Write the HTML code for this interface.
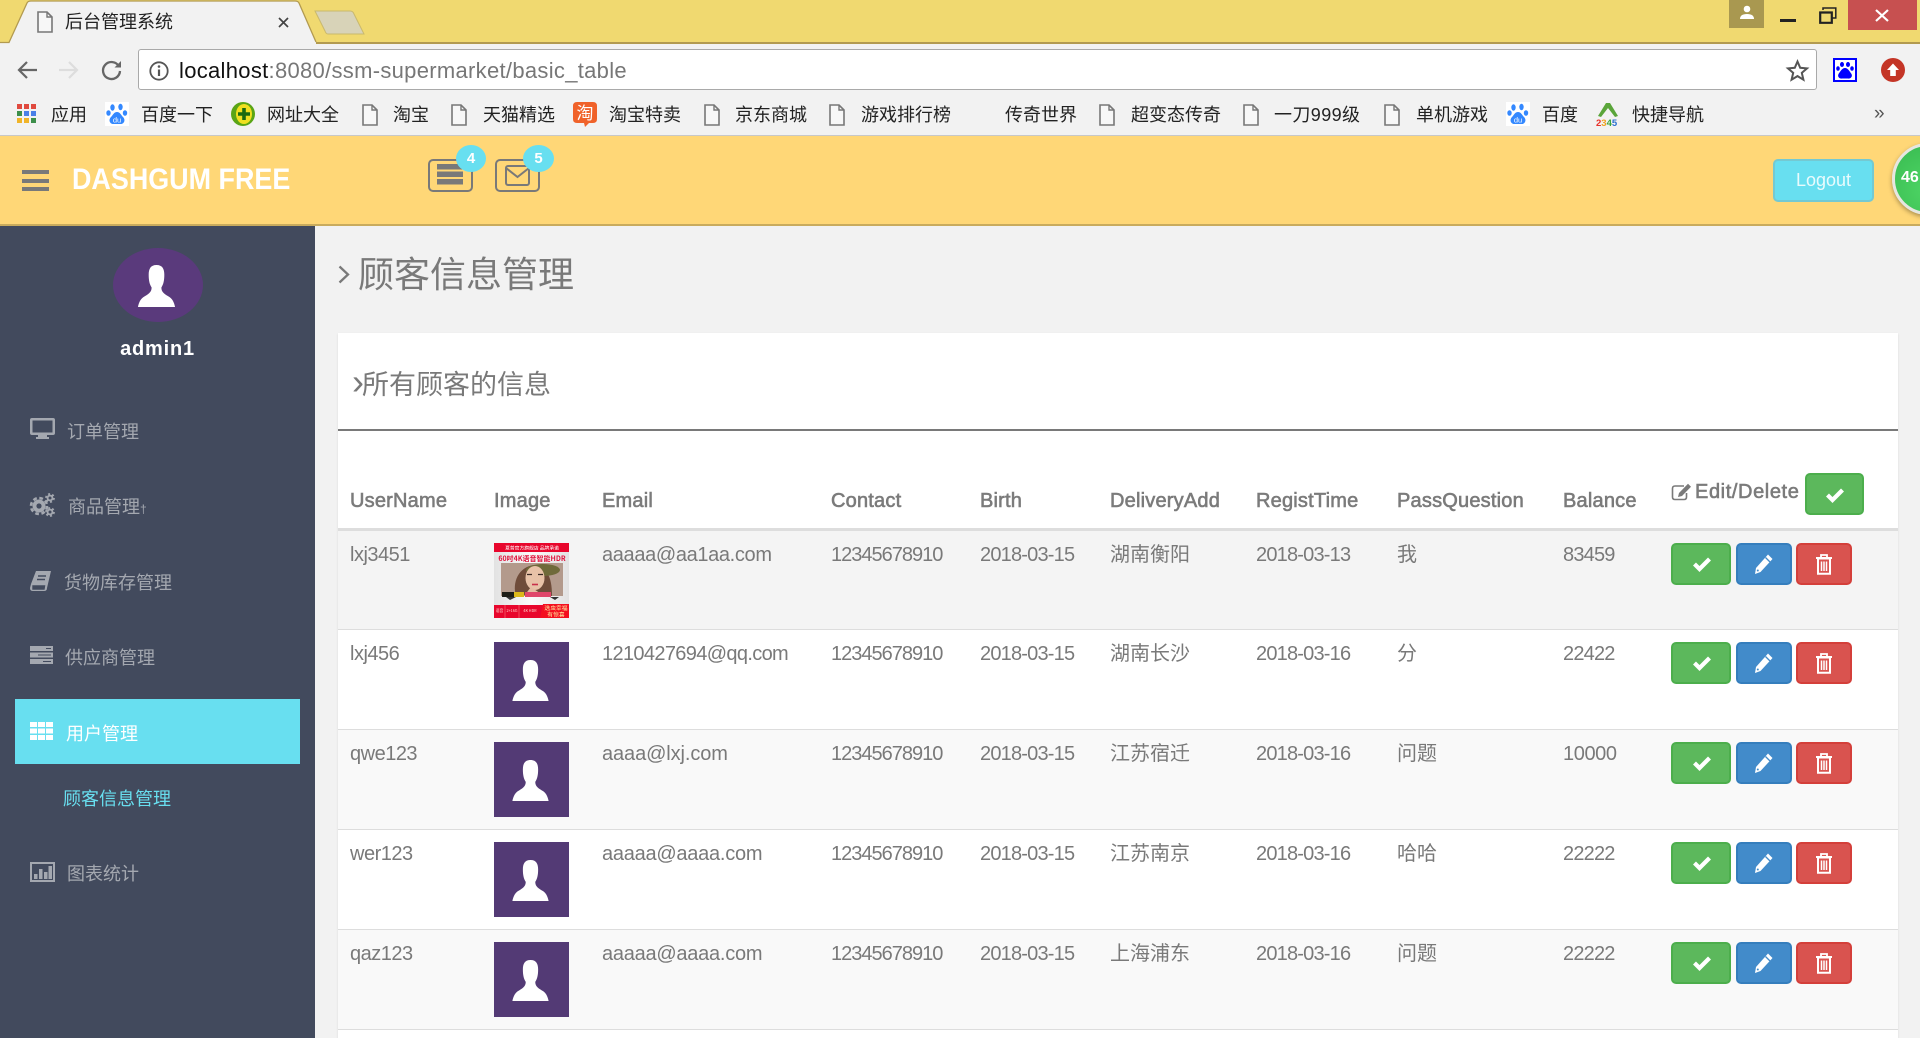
<!DOCTYPE html>
<html lang="zh"><head><meta charset="utf-8"><title>后台管理系统</title>
<style>
html,body{margin:0;padding:0}
body{width:1920px;height:1038px;overflow:hidden;position:relative;background:#f2f2f2;font-family:"Liberation Sans","Noto Sans CJK SC",sans-serif;color:#797979}
.a{position:absolute;white-space:nowrap}
svg{position:absolute;overflow:visible}
.bm{position:absolute;top:103px;line-height:24px;font-size:18px;color:#222;white-space:nowrap}
.m{position:absolute;white-space:nowrap;font-size:18px;line-height:26px;color:#a4a8b0}
table{position:absolute;left:338px;top:444px;width:1560px;border-collapse:collapse;table-layout:fixed;color:#797979}
th{height:85px;padding:0 0 15px 0;box-sizing:border-box;border-bottom:3px solid #ddd;vertical-align:bottom;text-align:left;font-size:20px;line-height:24px;font-weight:normal;-webkit-text-stroke:.6px #7b7b7b;letter-spacing:.2px;white-space:nowrap;color:#7b7b7b}
td{height:100px;padding:12px 0 0 0;box-sizing:border-box;border-bottom:1px solid #ddd;vertical-align:top;font-size:20px;line-height:24px;white-space:nowrap}
tr.o td{background:#f9f9f9}
tr.h td{background:#f4f4f4}
tr.w td{background:#fff}
td.n{letter-spacing:-.8px}
td.p{letter-spacing:-1px}
td.e{letter-spacing:-.35px}
td:first-child{letter-spacing:-.5px}
td:first-child,th:first-child{padding-left:12px}
.pic{display:block;width:75px;height:75px;background:#533a75;position:relative}
.btn{position:absolute;top:12px;height:42px;box-sizing:border-box;border-radius:5px;border:2px solid}
.g{background:#5cb85c;border-color:#4cae4c;left:0;width:60px}
.b{background:#428bca;border-color:#357ebd;left:64px;width:56px}
.r{background:#d9534f;border-color:#d43f3a;left:125px;width:56px}
</style></head><body>
<svg width="0" height="0" style="position:absolute">
<defs>
<symbol id="doc" viewBox="0 0 16 22"><path d="M1 1H10L15 6V21H1Z" fill="#f7f7f7" stroke="#777" stroke-width="1.6"/><path d="M10 1V6H15" fill="none" stroke="#777" stroke-width="1.4"/></symbol>
<symbol id="paw" viewBox="0 0 24 24"><rect width="24" height="24" fill="#fff"/><ellipse cx="7.5" cy="5.5" rx="2.2" ry="3.2" fill="#3388ff"/><ellipse cx="15.5" cy="5" rx="2.2" ry="3.2" fill="#3388ff"/><ellipse cx="3.5" cy="11" rx="2.2" ry="2.8" fill="#3388ff"/><ellipse cx="20" cy="11" rx="2.2" ry="2.8" fill="#3388ff"/><path d="M12 10C9 10 8 13 6 15C3 18 5 22.500 9 22H15C19 22.500 21 18 18 15C16 13 15 10 12 10Z" fill="#3388ff"/><text x="12" y="20.500" font-size="7.500" fill="#fff" text-anchor="middle" font-family="Liberation Sans">du</text></symbol>
<symbol id="user" viewBox="0 0 38 43"><path d="M19 0C13 0 11 4 11 10C11 16 12 20 14 23C14 27 12 29 7 32C3 34 1 38 0 43H38C37 38 35 34 31 32C26 29 24 27 24 23C26 20 27 16 27 10C27 4 25 0 19 0Z" fill="#fff"/></symbol>
<symbol id="chk" viewBox="0 0 20 16"><path d="M2.500 8L7.500 13L17.500 3" fill="none" stroke="#fff" stroke-width="4.200"/></symbol>
<symbol id="pen" viewBox="0 0 20 22"><path d="M14 1.500L18.500 6L6.500 19L1 21L2 15Z" fill="#fff"/><path d="M11.500 4.500L16 9" stroke="#428bca" stroke-width="1.300"/><circle cx="3.800" cy="17.500" r="1" fill="#428bca"/></symbol>
<symbol id="tr" viewBox="0 0 18 22"><path d="M1 5H17" stroke="#fff" stroke-width="2"/><path d="M6 4.500V2H12V4.500" fill="none" stroke="#fff" stroke-width="1.800"/><path d="M3 5.500H15V20.800H3Z" fill="none" stroke="#fff" stroke-width="2"/><path d="M6.500 8.500V18M9 8.500V18M11.500 8.500V18" stroke="#fff" stroke-width="1.500"/></symbol>
</defs></svg>

<!-- browser chrome -->
<div class="a" style="left:0;top:0;width:1920px;height:43px;background:#f0d970"></div>
<div class="a" style="left:0;top:42px;width:1920px;height:1.500px;background:#b29a50"></div>
<svg style="left:0;top:0" width="380" height="44"><path d="M0 42H9L27 3Q28 1 31 1H295Q298 1 299 3L316 42V44H0Z" fill="#f2f2f2"/><path d="M0 42.500H9L27 3Q28 1 31 1H295Q298 1 299 3L316 42" fill="none" stroke="#b29a50" stroke-width="1.300"/><path d="M315 11H350Q353 11 354 14L364 34H328Q326 34 325 31Z" fill="#d8d3b8" stroke="#c9b96d"/></svg>
<svg style="left:37px;top:11px" width="16" height="22"><use href="#doc"/></svg>
<div class="a" style="left:65px;top:9px;font-size:18px;line-height:26px;color:#222">后台管理系统</div>
<svg style="left:278px;top:17px" width="11" height="11"><path d="M1 1L10 10M10 1L1 10" stroke="#444" stroke-width="1.700"/></svg>
<div class="a" style="left:1729px;top:0;width:35px;height:28px;background:#a99850"></div>
<svg style="left:1739px;top:5px" width="16" height="14"><circle cx="8" cy="4" r="3.300" fill="#fff"/><path d="M1 14Q1 9 8 9Q15 9 15 14Z" fill="#fff"/></svg>
<div class="a" style="left:1780px;top:19px;width:16px;height:3px;background:#222"></div>
<svg style="left:1819px;top:7px" width="18" height="17"><path d="M1.200 5.500H12.800V15.800H1.200Z" fill="none" stroke="#222" stroke-width="2.200"/><path d="M4 3V1H16.800V11H13" fill="none" stroke="#222" stroke-width="1.500"/></svg>
<div class="a" style="left:1848px;top:0;width:69px;height:30px;background:#c75050"></div>
<svg style="left:1875px;top:9px" width="14" height="13"><path d="M1 1L13 12M13 1L1 12" stroke="#fff" stroke-width="2.200"/></svg>

<div class="a" style="left:0;top:43.500px;width:1920px;height:91.500px;background:#f2f2f2"></div>
<div class="a" style="left:0;top:135px;width:1920px;height:1px;background:#c8c8c8"></div>
<svg style="left:17px;top:60px" width="20" height="20"><path d="M10 2L2 10L10 18M2.500 10H20" fill="none" stroke="#666" stroke-width="2.200"/></svg>
<svg style="left:59px;top:60px" width="20" height="20"><path d="M10 2L18 10L10 18M17.500 10H0" fill="none" stroke="#ddd" stroke-width="2.200"/></svg>
<svg style="left:101px;top:60px" width="21" height="21"><path d="M18 6.500A8.500 8.500 0 1 0 19 11" fill="none" stroke="#666" stroke-width="2.300"/><path d="M13.500 7.500H20V1Z" fill="#666"/></svg>
<div class="a" style="left:138px;top:49px;width:1679px;height:41px;box-sizing:border-box;background:#fff;border:1.500px solid #a9a9a9;border-radius:3px"></div>
<svg style="left:149px;top:61px" width="20" height="20"><circle cx="10" cy="10" r="8.700" fill="none" stroke="#555" stroke-width="1.800"/><path d="M10 8.500V15" stroke="#555" stroke-width="2.200"/><circle cx="10" cy="5.500" r="1.300" fill="#555"/></svg>
<div class="a" style="left:179px;top:58px;font-size:22px;line-height:26px;color:#777;letter-spacing:.3px"><span style="color:#111">localhost</span>:8080/ssm-supermarket/basic_table</div>
<svg style="left:1786px;top:59px" width="23" height="23"><path d="M11.500 2.500L14.200 8.800L21 9.400L15.800 13.900L17.400 20.700L11.500 17.100L5.600 20.700L7.200 13.900L2 9.400L8.800 8.800Z" fill="#fff" stroke="#555" stroke-width="2"/></svg>
<svg style="left:1833px;top:58px" width="24" height="24"><rect x="1" y="1" width="22" height="22" fill="#fff" stroke="#00f" stroke-width="2"/><ellipse cx="9" cy="6.500" rx="2" ry="2.500" fill="#00f"/><ellipse cx="15" cy="6.500" rx="2" ry="2.500" fill="#00f"/><ellipse cx="5" cy="10.500" rx="1.800" ry="2.300" fill="#00f"/><ellipse cx="19" cy="10.500" rx="1.800" ry="2.300" fill="#00f"/><path d="M12 10C9 10 7 14 5.500 16C4 19 7 21 9 20.500H15C17 21 20 19 18.500 16C17 14 15 10 12 10Z" fill="#00f"/></svg>
<svg style="left:1881px;top:58px" width="24" height="24"><circle cx="12" cy="12" r="12" fill="#c43526"/><path d="M12 5.500L18 12H14.800V18H9.200V12H6Z" fill="#fff"/></svg>

<!-- bookmarks -->
<svg style="left:17px;top:104px" width="19" height="19"><g fill="#e04a3f"><rect width="5" height="5"/><rect x="7" width="5" height="5"/><rect x="14" width="5" height="5"/></g><g fill="#3d8f4b"><rect y="7" width="5" height="5"/></g><g fill="#4a80e8"><rect x="7" y="7" width="5" height="5"/><rect x="14" y="7" width="5" height="5"/></g><g fill="#f0b429"><rect y="14" width="5" height="5"/><rect x="7" y="14" width="5" height="5"/></g><rect x="14" y="14" width="5" height="5" fill="#3d8f4b"/></svg>
<div class="bm" style="left:51px">应用</div>
<svg style="left:105px;top:102px" width="24" height="24"><use href="#paw"/></svg>
<div class="bm" style="left:141px">百度一下</div>
<svg style="left:231px;top:102px" width="24" height="24"><circle cx="12" cy="12" r="12" fill="#5aa516"/><ellipse cx="13" cy="12" rx="8" ry="10" fill="#f0e020"/><path d="M13 6V18M7 12H19" stroke="#1a6a10" stroke-width="3.600"/></svg>
<div class="bm" style="left:267px">网址大全</div>
<svg style="left:362px;top:104px" width="16" height="22"><use href="#doc"/></svg>
<div class="bm" style="left:393px">淘宝</div>
<svg style="left:451px;top:104px" width="16" height="22"><use href="#doc"/></svg>
<div class="bm" style="left:483px">天猫精选</div>
<svg style="left:573px;top:102px" width="24" height="25"><path d="M4 0H20Q24 0 24 4V17Q24 21 20 21H16L12 25L11 21H4Q0 21 0 17V4Q0 0 4 0Z" fill="#f0622a"/><text x="12" y="17" font-size="17" fill="#fff" text-anchor="middle" font-family="Noto Sans CJK SC">淘</text></svg>
<div class="bm" style="left:609px">淘宝特卖</div>
<svg style="left:704px;top:104px" width="16" height="22"><use href="#doc"/></svg>
<div class="bm" style="left:735px">京东商城</div>
<svg style="left:829px;top:104px" width="16" height="22"><use href="#doc"/></svg>
<div class="bm" style="left:861px">游戏排行榜</div>
<div class="bm" style="left:1005px">传奇世界</div>
<svg style="left:1099px;top:104px" width="16" height="22"><use href="#doc"/></svg>
<div class="bm" style="left:1131px">超变态传奇</div>
<svg style="left:1243px;top:104px" width="16" height="22"><use href="#doc"/></svg>
<div class="bm" style="left:1274px;letter-spacing:.4px">一刀999级</div>
<svg style="left:1384px;top:104px" width="16" height="22"><use href="#doc"/></svg>
<div class="bm" style="left:1416px">单机游戏</div>
<svg style="left:1506px;top:102px" width="24" height="24"><use href="#paw"/></svg>
<div class="bm" style="left:1542px">百度</div>
<svg style="left:1596px;top:102px" width="24" height="24"><path d="M2 14L10 1H14L22 14L19 15L12 6L5 15Z" fill="#5aa53a"/><text x="0" y="24" font-size="9.500" font-weight="bold" font-family="Liberation Sans"><tspan fill="#e8322a">2</tspan><tspan fill="#f0a020">3</tspan><tspan fill="#3aa53a">4</tspan><tspan fill="#2a70d0">5</tspan></text></svg>
<div class="bm" style="left:1632px">快捷导航</div>
<div class="a" style="left:1874px;top:101px;font-size:19px;line-height:26px;color:#555">»</div>

<!-- header -->
<div class="a" style="left:0;top:136px;width:1920px;height:88px;background:#ffd777"></div>
<div class="a" style="left:0;top:224px;width:1920px;height:2px;background:#c9ab5d"></div>
<div class="a" style="left:22px;top:170px;width:27px;height:4px;background:#797979"></div>
<div class="a" style="left:22px;top:179px;width:27px;height:4px;background:#797979"></div>
<div class="a" style="left:22px;top:187px;width:27px;height:4px;background:#797979"></div>
<div class="a" style="left:72px;top:162px;font-size:30px;line-height:36px;font-weight:bold;color:#fff;transform:scaleX(.897);transform-origin:left center">DASHGUM FREE</div>
<div class="a" style="left:428px;top:159px;width:45px;height:33px;box-sizing:border-box;border:2px solid #797979;border-radius:5px"></div>
<svg style="left:437px;top:164px" width="26" height="23"><g fill="#797979"><rect width="26" height="5.500"/><rect y="7.500" width="26" height="5.500"/><rect y="15" width="26" height="5.500"/></g></svg>
<div class="a" style="left:495px;top:159px;width:45px;height:33px;box-sizing:border-box;border:2px solid #797979;border-radius:5px"></div>
<svg style="left:505px;top:165px" width="25" height="21"><rect x="1" y="1" width="23" height="19" fill="none" stroke="#797979" stroke-width="2" rx="2"/><path d="M1 3L12.500 12L24 3" fill="none" stroke="#797979" stroke-width="2"/></svg>
<div class="a" style="left:456px;top:145px;width:30px;height:27px;border-radius:50%;background:#68dff0;color:#fff;font-size:15px;font-weight:bold;line-height:27px;text-align:center">4</div>
<div class="a" style="left:523px;top:145px;width:31px;height:27px;border-radius:50%;background:#68dff0;color:#fff;font-size:15px;font-weight:bold;line-height:27px;text-align:center">5</div>
<div class="a" style="left:1773px;top:159px;width:101px;height:43px;box-sizing:border-box;border:2px solid #74c9d2;border-radius:5px;background:#68dff0;color:#e9fbfd;font-size:18px;line-height:39px;text-align:center">Logout</div>
<div class="a" style="left:1892px;top:143px;width:72px;height:72px;box-sizing:border-box;border-radius:50%;border:3px solid #e6e6e0;background:radial-gradient(circle at 50% 65%,#4ed565,#38ba50);box-shadow:0 2px 5px rgba(0,0,0,.35)"></div>
<div class="a" style="left:1901px;top:167px;font-size:16px;line-height:22px;font-weight:bold;color:#fff">46</div>

<!-- sidebar -->
<div class="a" style="left:0;top:226px;width:315px;height:812px;background:#424a5d"></div>
<div class="a" style="left:113px;top:248px;width:90px;height:74px;border-radius:50%;background:#5a3a7c"></div>
<svg style="left:135px;top:265px" width="43" height="42"><use href="#user" width="43" height="42"/></svg>
<div class="a" style="left:0;top:335px;width:315px;text-align:center;font-size:20px;line-height:28px;font-weight:bold;color:#fff;letter-spacing:.8px">admin1</div>

<svg style="left:30px;top:418px" width="25" height="21"><path d="M2 0H23Q25 0 25 2V15Q25 17 23 17H2Q0 17 0 15V2Q0 0 2 0Z" fill="#a4a8b0"/><rect x="2.500" y="2.500" width="20" height="12" fill="#424a5d"/><rect x="8" y="17" width="9" height="2" fill="#a4a8b0"/><rect x="6" y="19" width="13" height="2" fill="#a4a8b0"/></svg>
<div class="m" style="left:67px;top:419px">订单管理</div>
<svg style="left:30px;top:493px" width="25" height="24"><circle cx="9" cy="13" r="6.500" fill="#a4a8b0"/><circle cx="9" cy="13" r="8" fill="none" stroke="#a4a8b0" stroke-width="2.600" stroke-dasharray="3.700 2.600"/><circle cx="9" cy="13" r="2.600" fill="#424a5d"/><circle cx="20" cy="5" r="3.400" fill="#a4a8b0"/><circle cx="20" cy="5" r="4" fill="none" stroke="#a4a8b0" stroke-width="1.800" stroke-dasharray="2 2.200"/><circle cx="20" cy="5" r="1.500" fill="#424a5d"/><circle cx="20" cy="19" r="3.400" fill="#a4a8b0"/><circle cx="20" cy="19" r="4" fill="none" stroke="#a4a8b0" stroke-width="1.800" stroke-dasharray="2 2.200"/><circle cx="20" cy="19" r="1.500" fill="#424a5d"/></svg>
<div class="m" style="left:68px;top:494px">商品管理<span style="font-size:12px">†</span></div>
<svg style="left:30px;top:571px" width="22" height="21"><path d="M6 0H21L17 17Q17 20 14 20H3Q0 20 0 17L1 13Z" fill="#a4a8b0"/><path d="M8 5H16M7 8.500H15M3 15H14.500L14 18H3Z" stroke="#424a5d" stroke-width="1.400" fill="#424a5d"/></svg>
<div class="m" style="left:64px;top:570px">货物库存管理</div>
<svg style="left:30px;top:646px" width="23" height="18"><g fill="#a4a8b0"><rect width="23" height="5"/><rect y="6.500" width="23" height="5"/><rect y="13" width="23" height="5"/></g><g fill="#424a5d"><rect x="16" y="2" width="5" height="1"/><rect x="8" y="8.500" width="13" height="1"/><rect x="13" y="15" width="8" height="1"/></g></svg>
<div class="m" style="left:65px;top:645px">供应商管理</div>
<div class="a" style="left:15px;top:699px;width:285px;height:65px;background:#68dff0"></div>
<svg style="left:30px;top:722px" width="23" height="18"><g fill="#fff"><rect width="7" height="5"/><rect x="8" width="7" height="5"/><rect x="16" width="7" height="5"/><rect y="6.500" width="7" height="5"/><rect x="8" y="6.500" width="7" height="5"/><rect x="16" y="6.500" width="7" height="5"/><rect y="13" width="7" height="5"/><rect x="8" y="13" width="7" height="5"/><rect x="16" y="13" width="7" height="5"/></g></svg>
<div class="m" style="left:66px;top:721px;color:#fff">用户管理</div>
<div class="m" style="left:63px;top:786px;color:#68dff0">顾客信息管理</div>
<svg style="left:30px;top:862px" width="25" height="20"><rect x="1" y="1" width="23" height="18" fill="none" stroke="#a4a8b0" stroke-width="2"/><g fill="#a4a8b0"><rect x="4" y="12" width="3.500" height="5"/><rect x="9" y="7" width="3.500" height="10"/><rect x="14" y="10" width="3.500" height="7"/><rect x="18.500" y="4" width="3.500" height="13"/></g></svg>
<div class="m" style="left:67px;top:861px">图表统计</div>

<!-- main -->
<svg style="left:338px;top:265px" width="12" height="19"><path d="M1.500 1.500L10 9.500L1.500 17.500" fill="none" stroke="#797979" stroke-width="2.300"/></svg>
<div class="a" style="left:358px;top:249px;font-size:36px;line-height:52px;color:#797979">顾客信息管理</div>
<div class="a" style="left:338px;top:333px;width:1560px;height:705px;background:#fff;box-shadow:0 1px 2px rgba(0,0,0,.1)"></div>
<div class="a" style="left:352px;top:365px;font-size:27px;line-height:40px;color:#797979"><span style="font-size:36px;line-height:0;margin-right:-2px">›</span>所有顾客的信息</div>
<div class="a" style="left:338px;top:429px;width:1560px;height:2px;background:#797979"></div>

<table>
<colgroup><col style="width:156px"><col style="width:108px"><col style="width:229px"><col style="width:149px"><col style="width:130px"><col style="width:146px"><col style="width:141px"><col style="width:166px"><col style="width:108px"><col style="width:227px"></colgroup>
<thead><tr><th>UserName</th><th>Image</th><th>Email</th><th>Contact</th><th>Birth</th><th>DeliveryAdd</th><th>RegistTime</th><th>PassQuestion</th><th>Balance</th>
<th style="position:relative;overflow:visible"><svg style="left:0;top:39px;-webkit-text-stroke:0" width="21" height="19"><path d="M13 3H4Q1.500 3 1.500 5.500V14Q1.500 16.500 4 16.500H13Q15.500 16.500 15.500 14V10" fill="none" stroke="#797979" stroke-width="1.600" /><path d="M17 .8L20 3.800L11 13L7 14L8 10Z" fill="#797979" stroke="none"/></svg><span style="position:absolute;left:24px;top:36px;letter-spacing:.6px;line-height:24px">Edit/Delete</span><span class="btn g" style="left:134px;top:29px;width:59px;-webkit-text-stroke:0"><svg style="left:18px;top:12px" width="20" height="16"><use href="#chk"/></svg></span></th></tr></thead>
<tbody>
<tr class="h"><td>lxj3451</td><td><svg style="position:relative;display:block" width="75" height="75" viewBox="0 0 75 75"><defs><linearGradient id="ag" x1="0" y1="0" x2="1" y2="0"><stop offset="0" stop-color="#e2e2e2"/><stop offset=".5" stop-color="#fafafa"/><stop offset="1" stop-color="#e2e2e2"/></linearGradient></defs><rect width="75" height="75" fill="url(#ag)"/><rect width="75" height="9" fill="#e8062c"/><text x="38" y="6.500" font-size="4.800" fill="#fff" text-anchor="middle" font-family="Noto Sans CJK SC">夏普官方旗舰店 品牌承诺</text><text x="38" y="18" font-size="7" font-weight="bold" fill="#e0103a" text-anchor="middle" font-family="Noto Sans CJK SC">60吋4K语音智能HDR</text><rect x="7" y="20" width="62" height="33" fill="#b39a8c"/><path d="M22 53C18 40 24 24 40 22C52 24 58 32 58 53Z" fill="#6f4c3a"/><ellipse cx="49" cy="27" rx="17" ry="6" fill="#6f6a3a"/><ellipse cx="41" cy="35" rx="9.500" ry="12" fill="#e8c2a8"/><path d="M37 44L50 53H30Z" fill="#e4bca2"/><path d="M33 31.500H38M44 31.500H49" stroke="#3a2a24" stroke-width="1.200"/><path d="M38 41.500H44" stroke="#c8304a" stroke-width="1.600"/><rect x="8" y="49" width="12" height="5" fill="#1d1d16"/><rect x="20" y="49" width="10" height="5" fill="#dcb81a"/><rect x="31" y="49" width="26" height="5" fill="#e0466a"/><path d="M12 54H22L16 57ZM56 54H65L61 57Z" fill="#333"/><rect y="62" width="75" height="13" fill="#e8062c"/><path d="M11 62V75M25 62V75" stroke="#f57a7a" stroke-width=".6"/><text x="5.500" y="69" font-size="3.800" fill="#ffd9d0" text-anchor="middle" font-family="Noto Sans CJK SC">语音</text><text x="18" y="69" font-size="3.800" fill="#ffd9d0" text-anchor="middle" font-family="Noto Sans CJK SC">2+16G</text><text x="36" y="69" font-size="3.800" fill="#ffd9d0" text-anchor="middle" font-family="Noto Sans CJK SC">4K HDR</text><path d="M49 61H75V75H46Z" fill="#f40f20"/><text x="62" y="67" font-size="5.800" fill="#ffe9a0" text-anchor="middle" font-family="Noto Sans CJK SC">选虫幸福</text><text x="62" y="73.500" font-size="5.800" fill="#ffe9a0" text-anchor="middle" font-family="Noto Sans CJK SC">有惊喜</text></svg></td><td class="e">aaaaa@aa1aa.com</td><td class="p">12345678910</td><td class="n">2018-03-15</td><td>湖南衡阳</td><td class="n">2018-03-13</td><td>我</td><td class="n">83459</td>
<td style="position:relative"><span class="btn g"><svg style="left:19px;top:11px" width="20" height="16"><use href="#chk"/></svg></span><span class="btn b" style="left:65px"><svg style="left:16px;top:8px" width="20" height="22"><use href="#pen"/></svg></span><span class="btn r"><svg style="left:17px;top:8px" width="18" height="22"><use href="#tr"/></svg></span></td></tr>

<tr class="w"><td>lxj456</td><td><span class="pic"><svg style="left:18px;top:18px" width="37" height="41"><use href="#user"/></svg></span></td><td class="e" style="letter-spacing:-.65px">1210427694@qq.com</td><td class="p">12345678910</td><td class="n">2018-03-15</td><td>湖南长沙</td><td class="n">2018-03-16</td><td>分</td><td class="n">22422</td>
<td style="position:relative"><span class="btn g"><svg style="left:19px;top:11px" width="20" height="16"><use href="#chk"/></svg></span><span class="btn b" style="left:65px"><svg style="left:16px;top:8px" width="20" height="22"><use href="#pen"/></svg></span><span class="btn r"><svg style="left:17px;top:8px" width="18" height="22"><use href="#tr"/></svg></span></td></tr>

<tr class="o"><td>qwe123</td><td><span class="pic"><svg style="left:18px;top:18px" width="37" height="41"><use href="#user"/></svg></span></td><td class="e" style="letter-spacing:-.1px">aaaa@lxj.com</td><td class="p">12345678910</td><td class="n">2018-03-15</td><td>江苏宿迁</td><td class="n">2018-03-16</td><td>问题</td><td class="n" style="letter-spacing:-.4px">10000</td>
<td style="position:relative"><span class="btn g"><svg style="left:19px;top:11px" width="20" height="16"><use href="#chk"/></svg></span><span class="btn b" style="left:65px"><svg style="left:16px;top:8px" width="20" height="22"><use href="#pen"/></svg></span><span class="btn r"><svg style="left:17px;top:8px" width="18" height="22"><use href="#tr"/></svg></span></td></tr>

<tr class="w"><td>wer123</td><td><span class="pic"><svg style="left:18px;top:18px" width="37" height="41"><use href="#user"/></svg></span></td><td class="e" style="letter-spacing:-.25px">aaaaa@aaaa.com</td><td class="p">12345678910</td><td class="n">2018-03-15</td><td>江苏南京</td><td class="n">2018-03-16</td><td>哈哈</td><td class="n">22222</td>
<td style="position:relative"><span class="btn g"><svg style="left:19px;top:11px" width="20" height="16"><use href="#chk"/></svg></span><span class="btn b" style="left:65px"><svg style="left:16px;top:8px" width="20" height="22"><use href="#pen"/></svg></span><span class="btn r"><svg style="left:17px;top:8px" width="18" height="22"><use href="#tr"/></svg></span></td></tr>

<tr class="o"><td>qaz123</td><td><span class="pic"><svg style="left:18px;top:18px" width="37" height="41"><use href="#user"/></svg></span></td><td class="e" style="letter-spacing:-.25px">aaaaa@aaaa.com</td><td class="p">12345678910</td><td class="n">2018-03-15</td><td>上海浦东</td><td class="n">2018-03-16</td><td>问题</td><td class="n">22222</td>
<td style="position:relative"><span class="btn g"><svg style="left:19px;top:11px" width="20" height="16"><use href="#chk"/></svg></span><span class="btn b" style="left:65px"><svg style="left:16px;top:8px" width="20" height="22"><use href="#pen"/></svg></span><span class="btn r"><svg style="left:17px;top:8px" width="18" height="22"><use href="#tr"/></svg></span></td></tr>
</tbody></table>
</body></html>
